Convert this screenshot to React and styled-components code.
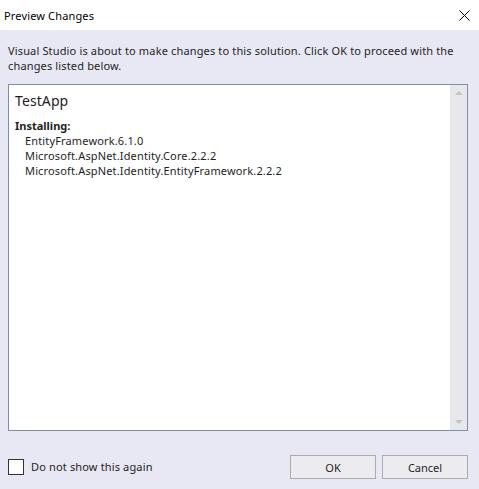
import React, { useState } from "react";
import styled, { createGlobalStyle } from "styled-components";

const GlobalStyle = createGlobalStyle`
    html, body {
        margin: 0;
        padding: 0;
        background: #e7e8f3;
    }
    body {
        font-family: "Noto Sans", "Open Sans", sans-serif;
        font-size: 11px;
        letter-spacing: 0.15px;
        color: #1e1e1e;
    }
`;

const packages = [
    "EntityFramework.6.1.0",
    "Microsoft.AspNet.Identity.Core.2.2.2",
    "Microsoft.AspNet.Identity.EntityFramework.2.2.2",
];

const App = () => {
    const [dontShow, setDontShow] = useState(false);

    return (
        <>
            <GlobalStyle />
            <Window>
                <TitleBar>
                    <Title>Preview Changes</Title>
                    <CloseButton aria-label="Close">
                        <svg width="11" height="11" viewBox="0 0 11 11">
                            <path d="M0.5 0.5 L10.5 10.5 M10.5 0.5 L0.5 10.5" stroke="#000" strokeWidth="1" fill="none" />
                        </svg>
                    </CloseButton>
                </TitleBar>
                <Body>
                    <Description>
                        Visual Studio is about to make changes to this solution. Click OK to proceed with the changes listed below.
                    </Description>
                    <ListBox>
                        <ListContent>
                            <ProjectName>TestApp</ProjectName>
                            <SectionLabel>Installing:</SectionLabel>
                            {packages.map((pkg) => (
                                <PackageItem key={pkg}>{pkg}</PackageItem>
                            ))}
                        </ListContent>
                        <Scrollbar>
                            <Arrow $dir="up" />
                            <Arrow $dir="down" />
                        </Scrollbar>
                    </ListBox>
                    <Footer>
                        <CheckLabel>
                            <CheckBox onClick={() => setDontShow(!dontShow)}>
                                {dontShow && "✓"}
                            </CheckBox>
                            Do not show this again
                        </CheckLabel>
                        <Actions>
                            <Button>OK</Button>
                            <Button>Cancel</Button>
                        </Actions>
                    </Footer>
                </Body>
            </Window>
        </>
    );
};

export default App;

const Window = styled.div`
    width: 479px;
    height: 489px;
    display: flex;
    flex-direction: column;
    background: #e7e8f3;
`;

const TitleBar = styled.header`
    height: 30px;
    background: #ffffff;
    display: flex;
    align-items: center;
    justify-content: space-between;
    padding: 0 9px 0 4px;
    box-sizing: border-box;
`;

const Title = styled.span`
    color: #000;
`;

const CloseButton = styled.div`
    width: 11px;
    height: 11px;
    display: flex;
    margin-top: 1px;
`;

const Body = styled.main`
    flex: 1;
    display: flex;
    flex-direction: column;
    padding: 13px 11px 0 8px;
`;

const Description = styled.p`
    margin: 0;
    line-height: 15px;
`;

const ListBox = styled.div`
    margin-top: 11px;
    height: 347px;
    box-sizing: border-box;
    border: 1px solid #828da3;
    background: #ffffff;
    display: flex;
`;

const ListContent = styled.div`
    flex: 1;
    padding: 6px 6px;
`;

const ProjectName = styled.div`
    font-size: 14px;
    letter-spacing: 0.1px;
    line-height: 20px;
    color: #1e1e1e;
    margin-bottom: 7px;
`;

const SectionLabel = styled.div`
    font-weight: bold;
    line-height: 15px;
    letter-spacing: 0;
`;

const PackageItem = styled.div`
    line-height: 15px;
    padding-left: 10px;
`;

const Scrollbar = styled.div`
    width: 17px;
    background: #e8e8ec;
    display: flex;
    flex-direction: column;
    justify-content: space-between;
    align-items: center;
    padding: 6px 0;
    box-sizing: border-box;
`;

const Arrow = styled.div`
    width: 0;
    height: 0;
    border-left: 4px solid transparent;
    border-right: 4px solid transparent;
    ${(p) => (p.$dir === "up" ? "border-bottom: 4px solid #c2c3c9;" : "border-top: 4px solid #c2c3c9;")}
`;

const Footer = styled.footer`
    display: flex;
    align-items: center;
    justify-content: space-between;
    margin-top: 24px;
`;

const CheckLabel = styled.label`
    display: flex;
    align-items: center;
    gap: 7px;
    margin-top: -1px;
`;

const CheckBox = styled.span`
    width: 14px;
    height: 14px;
    border: 1px solid #333337;
    background: #ffffff;
    display: flex;
    align-items: center;
    justify-content: center;
    font-size: 11px;
`;

const Actions = styled.div`
    display: flex;
    gap: 6px;
`;

const Button = styled.button`
    width: 86px;
    height: 24px;
    box-sizing: border-box;
    font: inherit;
    color: #1e1e1e;
    background: #ececf0;
    border: 1px solid #acacac;
    padding: 0;
    cursor: pointer;
`;
